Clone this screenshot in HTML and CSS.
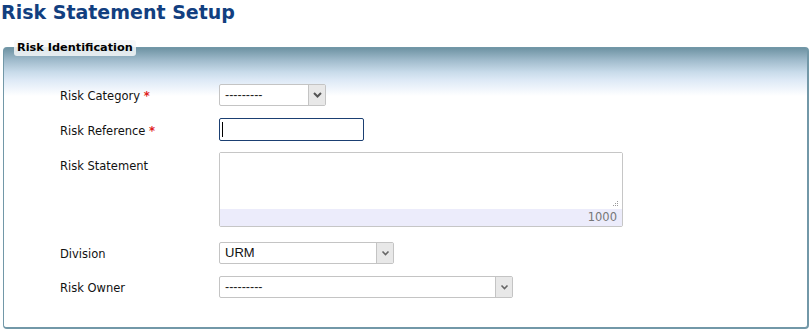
FILE: index.html
```html
<!DOCTYPE html>
<html>
<head>
<meta charset="utf-8">
<link rel="stylesheet" href="styles.css">
</head>
<body>
<h1 class="title">Risk Statement Setup</h1>
<div class="panel">
  <div class="legend">Risk Identification</div>
  <div class="form">
    <div class="label">Risk Category <span class="req">*</span></div>
    <div class="ctl">
      <div class="select w-cat"><span class="val">---------</span><span class="arrow"><svg width="9" height="6" viewBox="0 0 9 6"><path d="M1 1 L4.5 4.5 L8 1" fill="none" stroke="#555" stroke-width="2"/></svg></span></div>
    </div>

    <div class="label">Risk Reference <span class="req">*</span></div>
    <div class="ctl">
      <div class="input"><span class="caret"></span></div>
    </div>

    <div class="label lbl-top">Risk Statement</div>
    <div class="ctl">
      <div class="textarea">
        <div class="ta-body"><svg class="grip" width="6" height="6" viewBox="0 0 6 6"><rect x="4" y="0" width="1" height="1" fill="#999"/><rect x="2" y="2" width="1" height="1" fill="#999"/><rect x="4" y="2" width="1" height="1" fill="#999"/><rect x="0" y="4" width="1" height="1" fill="#999"/><rect x="2" y="4" width="1" height="1" fill="#999"/><rect x="4" y="4" width="1" height="1" fill="#999"/></svg></div>
        <div class="ta-count">1000</div>
      </div>
    </div>

    <div class="label gap-lg">Division</div>
    <div class="ctl gap-lg">
      <div class="select w-div"><span class="val val-dark">URM</span><span class="arrow"><svg width="9" height="6" viewBox="0 0 9 6"><path d="M1.5 1.5 L4.5 4.5 L7.5 1.5" fill="none" stroke="#666" stroke-width="1.6"/></svg></span></div>
    </div>

    <div class="label">Risk Owner</div>
    <div class="ctl">
      <div class="select w-own"><span class="val">---------</span><span class="arrow"><svg width="9" height="6" viewBox="0 0 9 6"><path d="M1.5 1.5 L4.5 4.5 L7.5 1.5" fill="none" stroke="#666" stroke-width="1.6"/></svg></span></div>
    </div>
  </div>
</div>
</body>
</html>
```
FILE: styles.css
```css
html, body {
  margin: 0;
  padding: 0;
  background: #fff;
}
body {
  font-family: "DejaVu Sans", Verdana, sans-serif;
  font-size: 11px;
  color: #222;
  width: 812px;
  height: 332px;
  overflow: hidden;
}
.title {
  margin: 0;
  padding: 0 0 0 1px;
  height: 26px;
  line-height: 25px;
  font-size: 19px;
  font-weight: bold;
  color: #123f80;
}
.panel {
  position: relative;
  margin: 21px 3px 0 3px;
  height: 282px;
  border: 1px solid #7298a8;
  border-right-width: 2px;
  border-bottom-width: 2px;
  border-radius: 4px;
  background: linear-gradient(to bottom, #6e93a3 0px, #9fbacb 12px, #c8dbea 24px, #dde9f6 32px, #eef4fb 40px, #ffffff 48px) no-repeat;
  background-size: 100% 50px;
  box-sizing: border-box;
}
.legend {
  position: absolute;
  left: 10px;
  top: -8px;
  padding: 1px 3px 2px 3px;
  font-weight: bold;
  font-size: 11.3px;
  line-height: 13px;
  color: #000;
  background: rgba(245, 247, 248, 0.85);
  border-radius: 3px;
}
.form {
  display: grid;
  grid-template-columns: 159px auto;
  row-gap: 12px;
  padding: 36px 0 0 56px;
  align-items: center;
}
.label {
  font-size: 11.5px;
  color: #111;
  padding-top: 2px;
}
.lbl-top {
  align-self: start;
  padding-top: 6px;
}
.req {
  color: #e02020;
  font-weight: bold;
}
.ctl {
  display: flex;
}
.gap-lg {
  margin-top: 3px;
}
.select {
  display: flex;
  align-items: stretch;
  height: 22px;
  box-sizing: border-box;
  border: 1px solid #c4c4c4;
  border-radius: 2px;
  background: #fff;
}
.select .val {
  flex: 1;
  padding-left: 5px;
  line-height: 20px;
  font-family: "Liberation Sans", Arial, sans-serif;
  font-size: 12.5px;
  color: #222;
}
.select .val-dark {
  color: #111;
  font-size: 13px;
}
.select .arrow {
  width: 16px;
  background: #e8e8e8;
  border-left: 1px solid #c4c4c4;
  display: flex;
  align-items: center;
  justify-content: center;
}
.w-cat { width: 107px; }
.w-div { width: 175px; }
.w-own { width: 294px; }
.input {
  width: 145px;
  height: 23px;
  box-sizing: border-box;
  border: 1px solid #1b3f72;
  border-radius: 2px;
  display: flex;
  align-items: center;
  padding-left: 2px;
}
.caret {
  width: 1px;
  height: 15px;
  background: #000;
}
.textarea {
  width: 404px;
  height: 75px;
  box-sizing: border-box;
  border: 1px solid #c6c6c6;
  border-radius: 2px;
  display: flex;
  flex-direction: column;
  margin-top: -1px;
}
.ta-body {
  flex: 1;
  background: #fff;
  display: flex;
  justify-content: flex-end;
  align-items: flex-end;
  padding: 0 3px 2px 0;
}
.ta-count {
  height: 17px;
  line-height: 17px;
  background: #ececfb;
  text-align: right;
  padding-right: 5px;
  color: #777;
  font-size: 11.5px;
}
```
